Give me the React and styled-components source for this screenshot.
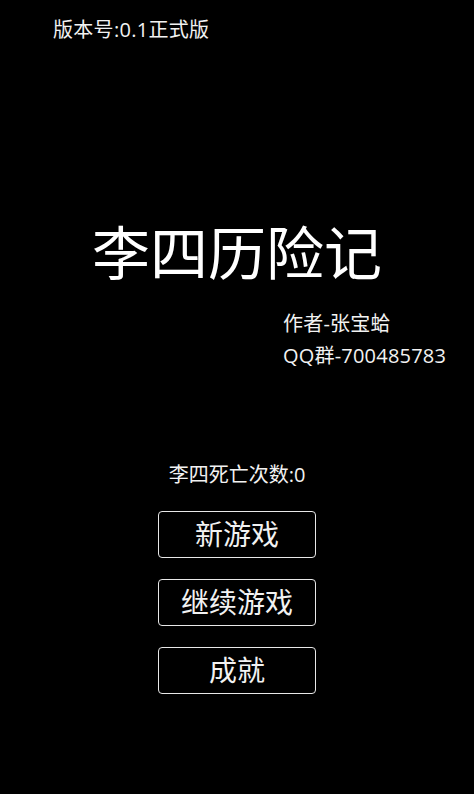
import React from "react";
import styled, { createGlobalStyle } from "styled-components";

const Global = createGlobalStyle`
  html, body { margin: 0; padding: 0; background: #000; }
  body { font-family: "Open Sans", "Noto Sans CJK SC", sans-serif; color: #f2f2f2; }
`;

const Screen = styled.div`
  width: 474px;
  height: 794px;
  background: #000;
  display: flex;
  flex-direction: column;
  box-sizing: border-box;
  padding-top: 18px;
  overflow: hidden;
`;

const Version = styled.div`
  font-size: 20px;
  line-height: 24px;
  padding-left: 53px;
  letter-spacing: 0.3px;
`;

const Title = styled.h1`
  margin: 176px 0 0;
  font-size: 58px;
  line-height: 64px;
  font-weight: 400;
  text-align: center;
  color: #fff;
  font-family: "Noto Sans CJK SC", sans-serif;
`;

const Credits = styled.div`
  margin-top: 26px;
  padding-left: 283px;
  font-size: 20px;
  line-height: 32px;
  letter-spacing: 0.2px;
`;

const DeathCount = styled.div`
  margin-top: 91px;
  font-size: 20px;
  line-height: 24px;
  text-align: center;
`;

const Menu = styled.div`
  margin-top: 24px;
  display: flex;
  flex-direction: column;
  align-items: center;
  gap: 21px;
`;

const MenuButton = styled.button`
  width: 158px;
  height: 47px;
  box-sizing: border-box;
  background: #000;
  border: 1px solid #e8e8e8;
  border-radius: 4px;
  color: #f2f2f2;
  font-family: "Noto Sans CJK SC", sans-serif;
  font-size: 28px;
  line-height: 1;
  padding: 0 0 4px;
  display: flex;
  align-items: center;
  justify-content: center;
  cursor: pointer;
`;

export default function App() {
  return (
    <>
      <Global />
      <Screen>
        <Version>版本号:0.1正式版</Version>
        <Title>李四历险记</Title>
        <Credits>
          <div>作者-张宝蛤</div>
          <div>QQ群-700485783</div>
        </Credits>
        <DeathCount>李四死亡次数:0</DeathCount>
        <Menu>
          <MenuButton>新游戏</MenuButton>
          <MenuButton>继续游戏</MenuButton>
          <MenuButton>成就</MenuButton>
        </Menu>
      </Screen>
    </>
  );
}
